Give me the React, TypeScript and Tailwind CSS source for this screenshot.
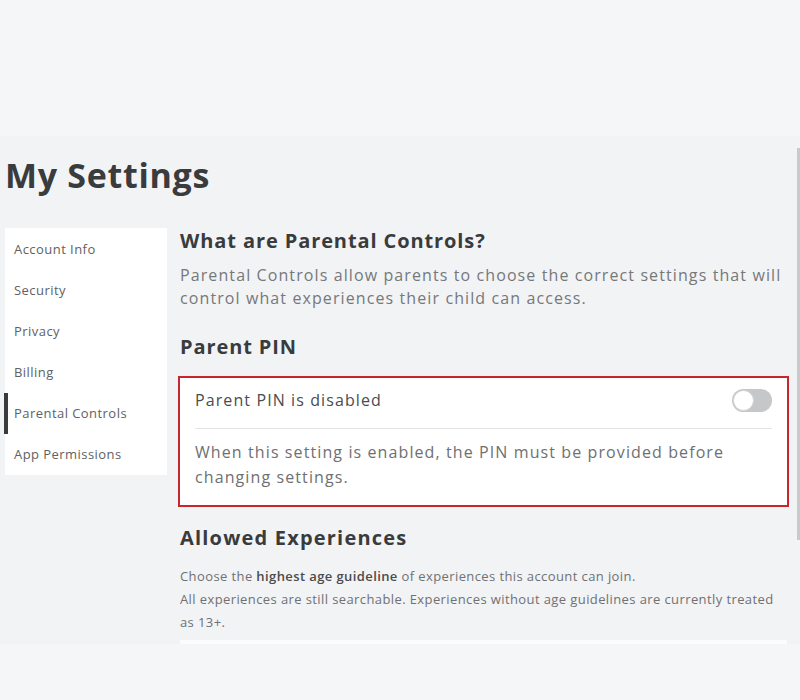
const navItems = [
  'Account Info',
  'Security',
  'Privacy',
  'Billing',
  'Parental Controls',
  'App Permissions',
];

const font = { fontFamily: '"Open Sans", "Liberation Sans", sans-serif' };

export default function App() {
  return (
    <div className="w-[800px] h-[700px] bg-[#f5f6f7] overflow-hidden" style={font}>
      {/* top blank band */}
      <div className="h-[136px]" />

      {/* main settings area */}
      <div className="relative h-[508px] bg-[#f2f3f5] pl-[5px]">
        {/* scrollbar sliver on the right */}
        <div className="absolute right-0 top-[12px] h-[392px] w-[3px] bg-[#c9cacb]" />

        <h1 className="pt-[17px] text-[34px] leading-[44px] font-bold text-[#393b3d] tracking-[0.7px]">
          My Settings
        </h1>

        <div className="flex mt-[31px]">
          {/* left nav */}
          <ul className="w-[162px] h-[247px] bg-white py-[1px] shrink-0">
            {navItems.map((item) => (
              <li
                key={item}
                className="relative h-[41px] flex items-center pl-[9px] text-[13px] text-[#5f6163] tracking-[0.45px]"
              >
                {item === 'Parental Controls' && (
                  <span className="absolute left-[-1px] top-0 h-[41px] w-[4px] bg-[#393b3d]" />
                )}
                {item}
              </li>
            ))}
          </ul>

          {/* content column */}
          <div className="ml-[13px] w-[609px]">
            <h2 className="text-[20px] leading-[28px] font-bold text-[#393b3d] -mt-[1px] tracking-[0.9px]">
              What are Parental Controls?
            </h2>
            <p className="mt-[9px] text-[16px] leading-[23px] text-[#76787a] tracking-[1.1px]">
              Parental Controls allow parents to choose the correct settings that will control what experiences
              their child can access.
            </p>

            <h2 className="mt-[23px] text-[20px] leading-[28px] font-bold text-[#393b3d] tracking-[0.9px]">
              Parent PIN
            </h2>

            <div className="mt-[15px] -ml-[2px] w-[611px] border-2 border-[#c8262e] bg-white px-[15px] pt-[10px] pb-[15px]">
              <div className="flex items-center justify-between h-[24px]">
                <span className="text-[16px] text-[#4a4c4e] tracking-[1.1px]">Parent PIN is disabled</span>
                <span className="relative w-[40px] h-[23px] rounded-full bg-[#c6c7c8]">
                  <span className="absolute left-[1px] top-[1px] w-[21px] h-[21px] rounded-full bg-white border border-[#d4d5d6]" />
                </span>
              </div>
              <div className="mt-[16px] h-px bg-[#e3e4e5]" />
              <p className="mt-[11px] text-[16px] leading-[25px] text-[#6e7072] tracking-[1.1px]">
                When this setting is enabled, the PIN must be provided before changing settings.
              </p>
            </div>

            <h2 className="mt-[17px] text-[20px] leading-[28px] font-bold text-[#393b3d] tracking-[1.2px]">
              Allowed Experiences
            </h2>
            <div className="mt-[13px] text-[13px] leading-[23px] text-[#6f7173] pr-[4px] tracking-[0.4px]">
              <p>
                Choose the <span className="font-semibold text-[#4a4c4e]">highest age guideline</span> of experiences
                this account can join.
              </p>
              <p>
                All experiences are still searchable. Experiences without age guidelines are currently treated as
                13+.
              </p>
            </div>
            <div className="mt-[6px] h-[4px] w-[607px] bg-white/70" />
          </div>
        </div>
      </div>
    </div>
  );
}
